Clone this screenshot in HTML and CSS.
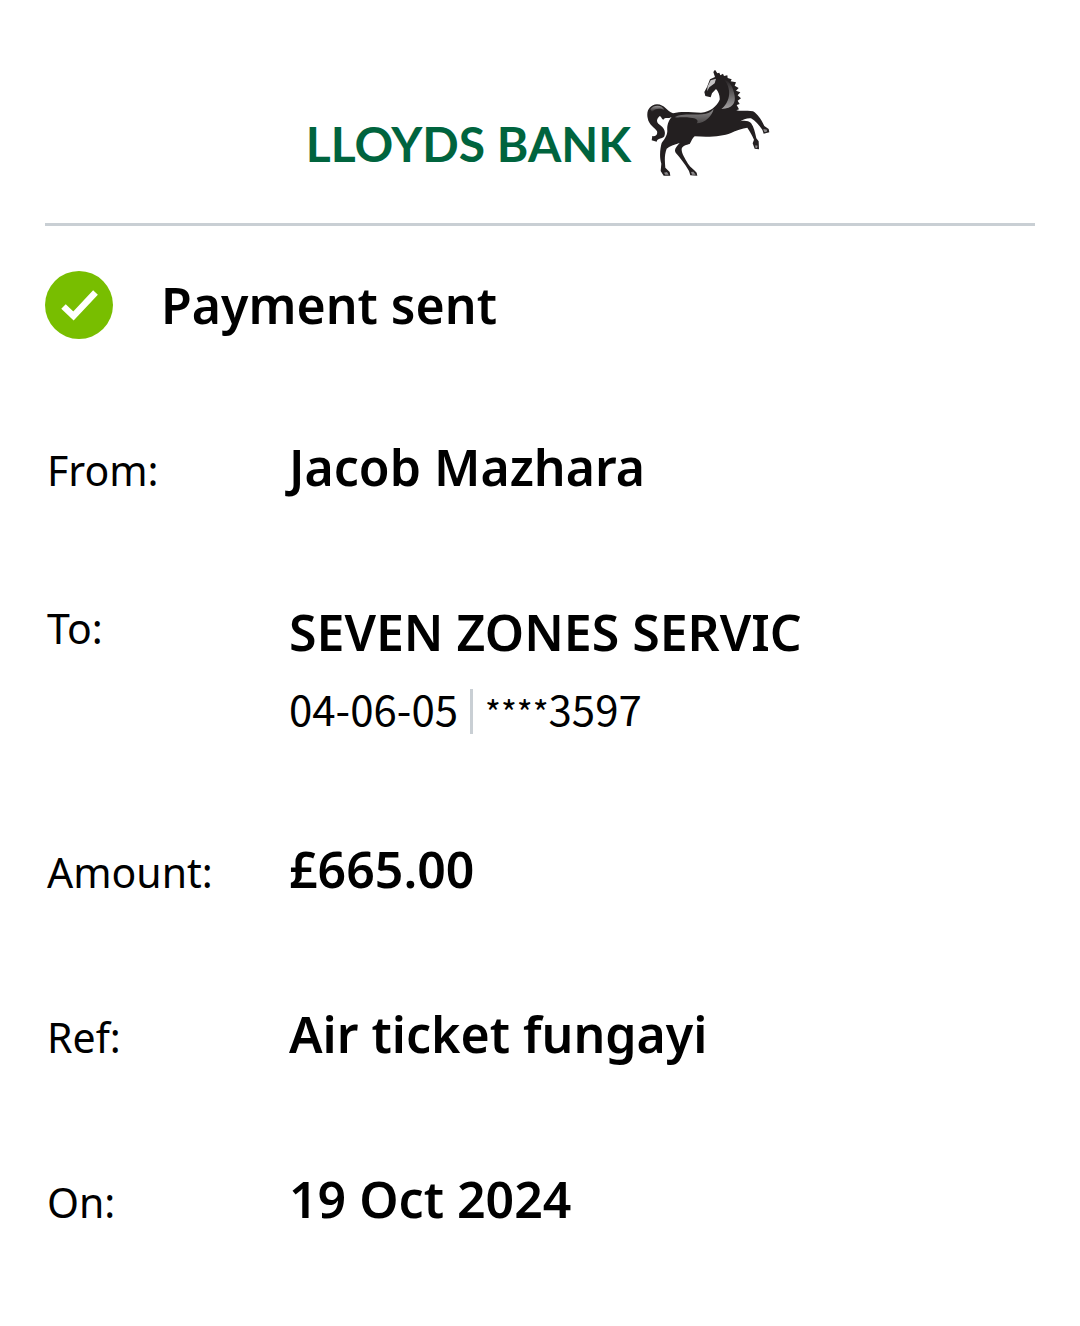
FILE: index.html
```
<!DOCTYPE html>
<html lang="en">
<head>
<meta charset="utf-8">
<meta name="viewport" content="width=device-width, initial-scale=1">
<title>Payment sent</title>
<link rel="stylesheet" href="styles.css">
</head>
<body>
<main class="receipt">
  <header class="brand">
    <span class="brand-name">LLOYDS BANK</span>
    <svg class="brand-horse" viewBox="0 0 420 375" aria-hidden="true">
      <defs>
        <linearGradient id="neck" x1="0" y1="0" x2="0" y2="1"><stop offset="0" stop-color="#231f20"/><stop offset="1" stop-color="#a5a3a4"/></linearGradient>
        <linearGradient id="back" x1="0" y1="0" x2="0" y2="1"><stop offset="0" stop-color="#8f8d8e"/><stop offset="1" stop-color="#4a4748"/></linearGradient>
        <linearGradient id="tail" x1="0" y1="0" x2="0" y2="1"><stop offset="0" stop-color="#9a9899"/><stop offset="1" stop-color="#231f20"/></linearGradient>
      </defs>
      <path fill="#231f20" d="M225 29 L232 40 L238 38 L241 46 L249 41 L252 48 L262 46 L263 54 L275 58 L272 64 L288 67 L284 77 L296 84 L288 92 L301 97 L293 106 L303 115 L293 122 L299 132 L290 135 L297 148 L289 151 C308 155 323 149 339 154 C353 162 364 179 373 198 L386 207 L388 217 L371 221 L367 209 C357 195 345 181 333 175 C320 174 308 179 301 184 C314 181 326 183 333 189 C342 201 345 218 349 235 L356 244 L357 268 L344 266 L338 250 L342 239 C337 228 330 214 322 203 C308 206 287 210 273 219 C246 229 214 232 164 229 C157 234 155 243 149 252 C139 255 129 256 125 266 C124 280 135 295 144 311 C152 323 162 328 170 338 L172 347 L151 346 L147 333 C135 311 119 292 107 278 C101 269 109 260 119 249 C103 254 88 258 80 266 C73 285 74 302 76 323 L89 336 L91 347 L71 347 L62 333 L64 311 C57 289 61 263 65 249 C72 240 81 229 82 213 C80 195 87 179 95 171 C84 178 76 170 70 179 C63 177 66 169 58 169 C51 177 48 184 55 191 C69 200 79 212 73 229 C67 238 53 233 50 245 L35 241 L37 228 C46 230 54 224 51 214 C46 204 26 195 23 174 C18 151 30 135 51 133 C74 133 80 154 99 160 C128 152 153 158 183 158 C211 155 230 139 239 119 C240 108 236 95 228 87 L216 100 L212 112 L196 108 L193 96 L201 81 L210 58 L225 51 L220 36 Z"/>
      <path fill="url(#tail)" d="M31 148 C42 132 68 135 73 150 C61 143 43 145 36 156 Z"/>
      <path fill="url(#back)" d="M104 172 C125 156 180 170 207 158 C214 154 218 150 221 146 C218 166 195 190 170 190 C178 180 168 174 151 173 C132 170 114 173 104 172 Z"/>
      <path fill="url(#neck)" d="M252 58 C270 63 280 84 284 108 C287 128 279 146 244 147 C266 132 280 92 252 58 Z"/>
      <path fill="#c4c2c3" d="M212 61 L228 56 L224 70 L208 82 L201 94 L203 79 Z"/>
      <path fill="#8b898a" d="M370 207 L382 209 L379 217 L372 215 Z M346 256 L353 257 L351 264 L346 263 Z M72 338 L81 336 L86 344 L76 344 Z M153 336 L160 335 L167 344 L156 344 Z"/>
    </svg>
  </header>

  <section class="status">
    <svg class="status-icon" viewBox="0 0 68 68" aria-hidden="true">
      <circle cx="34" cy="34" r="34" fill="#78be00"/>
      <path d="M18.500 35.500 L28.500 45 L50.500 21.500" fill="none" stroke="#fff" stroke-width="6.500"/>
    </svg>
    <h1 class="status-title">Payment sent</h1>
  </section>

  <dl class="details">
    <div class="row">
      <dt class="label">From:</dt>
      <dd class="value">Jacob Mazhara</dd>
    </div>
    <div class="row row-payee">
      <dt class="label">To:</dt>
      <dd class="value">SEVEN ZONES SERVIC
        <div class="account">
          <span>04-06-05</span>
          <span class="divider"></span>
          <span><span class="mask">****</span>3597</span>
        </div>
      </dd>
    </div>
    <div class="row">
      <dt class="label">Amount:</dt>
      <dd class="value">£665.00</dd>
    </div>
    <div class="row">
      <dt class="label">Ref:</dt>
      <dd class="value">Air ticket fungayi</dd>
    </div>
    <div class="row">
      <dt class="label">On:</dt>
      <dd class="value">19 Oct 2024</dd>
    </div>
  </dl>
</main>
</body>
</html>
```
FILE: styles.css
```
* {
  box-sizing: border-box;
}

body {
  margin: 0;
  background: #fff;
  color: #000;
  font-family: "Noto Sans", "Open Sans", sans-serif;
}

.receipt {
  padding: 60px 45px 72px;
}

.brand {
  display: flex;
  justify-content: center;
  align-items: flex-start;
  gap: 9px;
  padding: 0 0 38px 6px;
  border-bottom: 3px solid #c9cfd4;
}

.brand-name {
  padding-top: 54px;
  color: #00643e;
  font-family: Lato, sans-serif;
  font-size: 48px;
  font-weight: 700;
  line-height: 60px;
}

.brand-horse {
  width: 140px;
  height: 125px;
}

.status {
  display: flex;
  align-items: center;
  gap: 48px;
  padding-top: 45px;
}

.status-icon {
  width: 68px;
  height: 68px;
}

.status-title {
  margin: 0;
  font-size: 50px;
  font-weight: 600;
  line-height: 68px;
}

.details {
  display: flex;
  flex-direction: column;
  gap: 97px;
  margin: 94px 0 0;
  padding-left: 2px;
}

.row {
  display: grid;
  grid-template-columns: 242px 1fr;
  align-items: baseline;
}

.row-payee {
  align-items: start;
}

.label {
  font-size: 41px;
  line-height: 60px;
}

.value {
  margin: 0;
  font-size: 50px;
  font-weight: 600;
  line-height: 68px;
}

.account {
  display: flex;
  align-items: flex-end;
  gap: 12px;
  padding: 16px 0 4px;
  font-family: "Noto Sans CJK SC", "Noto Sans", sans-serif;
  font-size: 42px;
  font-weight: 400;
  line-height: 52px;
}

.divider {
  width: 3px;
  height: 45px;
  background: #c9cfd4;
}

.mask {
  font-size: 34px;
  line-height: 1;
}
```
